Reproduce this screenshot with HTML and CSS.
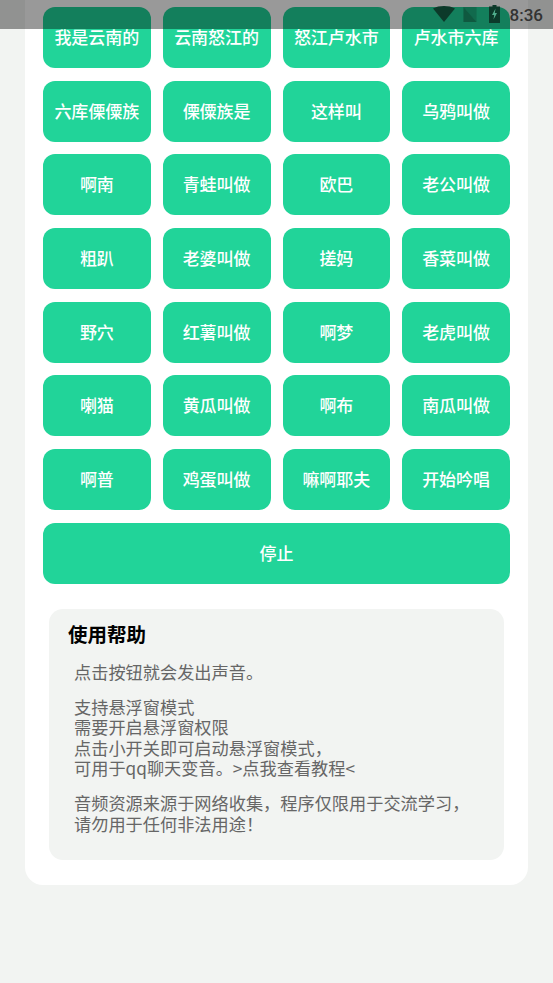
FILE: index.html
```html
<!DOCTYPE html>
<html lang="zh-CN">
<head>
  <meta charset="UTF-8">
  <meta name="viewport" content="width=device-width, initial-scale=1.0">
  <title>使用帮助</title>
  <link rel="stylesheet" href="styles.css">
</head>
<body>
  <div class="status-bar">
    <svg class="icon-wifi" viewBox="0 0 22 16"><path d="M0 2.500C3 .8 7 0 11 0s8 .8 11 2.500L11 16z"/></svg>
    <svg class="icon-signal" viewBox="0 0 14 16"><path d="M0 0h14v16z" fill-opacity=".3"/><path d="M0 0l14 16H0z" fill-opacity=".55"/></svg>
    <svg class="icon-battery" viewBox="0 0 11 18"><path d="M3.500 0h4v1.500H11V18H0V1.500h3.500z"/><path class="bolt" d="M6.500 3.500L3 10h2.200l-.7 4.500L8 8H5.800z"/></svg>
    <span class="clock">8:36</span>
  </div>

  <div class="card">
    <div class="sound-grid">
      <button class="sound-btn">我是云南的</button>
      <button class="sound-btn">云南怒江的</button>
      <button class="sound-btn">怒江卢水市</button>
      <button class="sound-btn">卢水市六库</button>
      <button class="sound-btn">六库傈僳族</button>
      <button class="sound-btn">傈僳族是</button>
      <button class="sound-btn">这样叫</button>
      <button class="sound-btn">乌鸦叫做</button>
      <button class="sound-btn">啊南</button>
      <button class="sound-btn">青蛙叫做</button>
      <button class="sound-btn">欧巴</button>
      <button class="sound-btn">老公叫做</button>
      <button class="sound-btn">粗趴</button>
      <button class="sound-btn">老婆叫做</button>
      <button class="sound-btn">搓妈</button>
      <button class="sound-btn">香菜叫做</button>
      <button class="sound-btn">野穴</button>
      <button class="sound-btn">红薯叫做</button>
      <button class="sound-btn">啊梦</button>
      <button class="sound-btn">老虎叫做</button>
      <button class="sound-btn">喇猫</button>
      <button class="sound-btn">黄瓜叫做</button>
      <button class="sound-btn">啊布</button>
      <button class="sound-btn">南瓜叫做</button>
      <button class="sound-btn">啊普</button>
      <button class="sound-btn">鸡蛋叫做</button>
      <button class="sound-btn">嘛啊耶夫</button>
      <button class="sound-btn">开始吟唱</button>
      <button class="sound-btn stop">停止</button>
    </div>

    <div class="help">
      <h2 class="help-title">使用帮助</h2>
      <p>点击按钮就会发出声音。</p>
      <p>支持悬浮窗模式<br>需要开启悬浮窗权限<br>点击小开关即可启动悬浮窗模式，<br>可用于qq聊天变音。&gt;点我查看教程&lt;</p>
      <p>音频资源来源于网络收集，程序仅限用于交流学习，<br>请勿用于任何非法用途！</p>
    </div>
  </div>
</body>
</html>
```

FILE: styles.css
```css
* {
  box-sizing: border-box;
}
html, body {
  height: 100%;
}
body {
  margin: 0;
  overflow: hidden;
  background-color: #f2f4f2;
  font-family: "Noto Sans CJK SC", "Noto Sans", sans-serif;
}
.status-bar {
  position: absolute;
  top: 0;
  left: 0;
  width: 100%;
  height: 29px;
  display: flex;
  justify-content: flex-end;
  align-items: center;
  padding-right: 10px;
  background-color: rgba(0, 0, 0, 0.4);
  color: #333;
  z-index: 1;
}
.status-bar svg {
  fill: #0c3a2a;
}
.icon-wifi {
  width: 22px;
  height: 16px;
  margin-right: 8px;
  margin-top: -1px;
}
.icon-signal {
  width: 14px;
  height: 15px;
  margin-right: 12px;
}
.icon-battery {
  width: 11px;
  height: 18px;
  margin-right: 10px;
  margin-top: -2px;
}
.status-bar .bolt {
  fill: #4fae8c;
}
.clock {
  font-family: Roboto, sans-serif;
  font-size: 17px;
  font-weight: 500;
}
.card {
  width: 503px;
  margin: -40px 0 0 25px;
  padding: 47px 18px 25px;
  background-color: #fff;
  border-radius: 18px;
}
.sound-grid {
  display: grid;
  grid-template-columns: repeat(4, 1fr);
  column-gap: 12px;
  row-gap: 12.7px;
}
.sound-btn {
  height: 61px;
  padding: 0 0 2px;
  border: none;
  border-radius: 12px;
  background-color: #21d499;
  color: #fff;
  font-family: inherit;
  font-size: 17px;
  font-weight: 500;
}
.stop {
  grid-column: 1 / -1;
}
.help {
  margin: 25px 6px 0;
  padding: 11px 20px 26px 19px;
  background-color: #f2f4f2;
  border-radius: 14px;
  color: #666;
  font-size: 17.2px;
  line-height: 20.3px;
}
.help-title {
  margin: 0 0 14px;
  color: #000;
  font-size: 19.5px;
  font-weight: 700;
  line-height: 28px;
}
.help p {
  margin: 0 0 15px 6px;
}
.help p:last-child {
  margin-bottom: 0;
}
```
